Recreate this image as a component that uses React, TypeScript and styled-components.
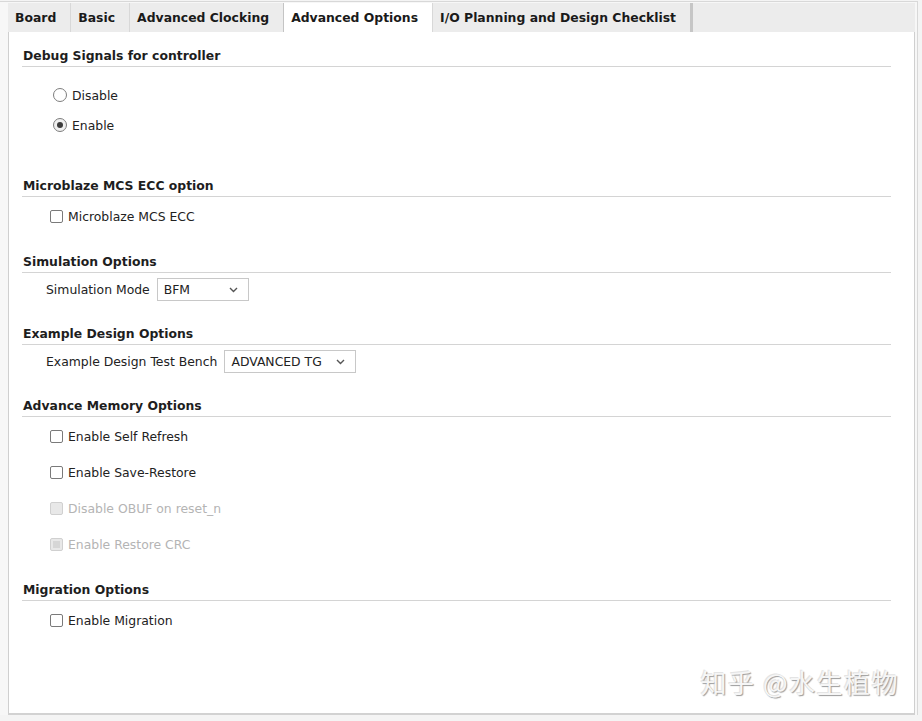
import React from "react";
import styled, { createGlobalStyle } from "styled-components";

const GlobalStyle = createGlobalStyle`
  html, body {
    margin: 0;
    padding: 0;
    background: #f4f4f4;
  }
  body {
    font-family: "DejaVu Sans", "Noto Sans", sans-serif;
    font-size: 12.4px;
    color: #1e1e1e;
  }
`;

const Frame = styled.div`
  position: relative;
  box-sizing: border-box;
  width: 918px;
  height: 714px;
  margin: 1px 0 0 0;
  padding: 1px 2px 0 8px;
  border-top: 1px solid #d8d8d8;
  border-right: 1px solid #d8d8d8;
  display: flex;
  flex-direction: column;
  background: #f7f7f7;
`;

const TabBar = styled.div`
  display: flex;
  height: 29px;
  background: #ececec;
  align-items: stretch;
`;

const Tab = styled.div<{ $active?: boolean; $last?: boolean }>`
  display: flex;
  align-items: center;
  padding: 0 14px 0 7px;
  font-weight: bold;
  color: #1a1a1a;
  background: ${(p) => (p.$active ? "#ffffff" : "transparent")};
  border-left: 1px solid ${(p) => (p.$active ? "#c4c4c4" : "#d8d8d8")};
  &:first-child {
    border-left: none;
  }
  ${(p) =>
    p.$last &&
    `
    border-right: 3px solid #c6c6c6;
  `}
`;

const Panel = styled.div`
  flex: 1;
  background: #ffffff;
  border-left: 1px solid #cfcfcf;
  border-right: 1px solid #cfcfcf;
  border-bottom: 2px solid #d2d2d2;
  padding: 0 23px 0 13px;
`;

const Section = styled.section<{ $top: number }>`
  margin-top: ${(p) => p.$top}px;
`;

const Heading = styled.div`
  font-weight: bold;
  line-height: 17px;
  padding: 0 0 2px 1px;
  border-bottom: 1px solid #d4d4d4;
`;

const Body = styled.div<{ $top: number }>`
  margin-top: ${(p) => p.$top}px;
  display: flex;
  flex-direction: column;
`;

const OptionRow = styled.label<{ $h: number; $indent: number; $disabled?: boolean }>`
  display: flex;
  align-items: center;
  height: ${(p) => p.$h}px;
  padding-left: ${(p) => p.$indent}px;
  gap: 5px;
  color: ${(p) => (p.$disabled ? "#b4b4b4" : "#222222")};
`;

const RadioCircle = styled.span<{ $checked?: boolean }>`
  box-sizing: border-box;
  width: 14px;
  height: 14px;
  border-radius: 50%;
  border: 1px solid #7d7d7d;
  background: ${(p) => (p.$checked ? "#f0f0f0" : "#ffffff")};
  display: flex;
  align-items: center;
  justify-content: center;
  &::after {
    content: "";
    width: 6px;
    height: 6px;
    border-radius: 50%;
    background: ${(p) => (p.$checked ? "#3c3c3c" : "transparent")};
  }
`;

const CheckBox = styled.span<{ $disabled?: boolean; $mark?: boolean }>`
  box-sizing: border-box;
  width: 13px;
  height: 13px;
  border-radius: 2px;
  border: 1px solid ${(p) => (p.$disabled ? "#d0d0d0" : "#7a7a7a")};
  background: ${(p) => (p.$disabled ? "#e8e8e8" : "#ffffff")};
  display: flex;
  align-items: center;
  justify-content: center;
  &::after {
    content: "";
    width: 7px;
    height: 7px;
    background: ${(p) => (p.$mark ? "#d6d6d6" : "transparent")};
  }
`;

const FieldRow = styled.div`
  display: flex;
  align-items: center;
  height: 23px;
  padding-left: 24px;
  gap: 7px;
  color: #222222;
`;

const Select = styled.div<{ $w: number }>`
  box-sizing: border-box;
  width: ${(p) => p.$w}px;
  height: 23px;
  border: 1px solid #c8c8c8;
  background: #ffffff;
  display: flex;
  align-items: center;
  justify-content: space-between;
  padding: 0 10px 0 6px;
`;

const Watermark = styled.div`
  position: absolute;
  right: 18px;
  bottom: 15px;
  font-family: "Noto Sans CJK SC", sans-serif;
  font-size: 26px;
  letter-spacing: 1.5px;
  color: #f6f6f6;
  text-shadow: 1px 1px 1px #9c9c9c, -1px -1px 0 #e4e4e4;
`;

const Chevron = () => (
  <svg width="9" height="6" viewBox="0 0 9 6">
    <path d="M1 1 L4.5 4.5 L8 1" fill="none" stroke="#555" strokeWidth="1.4" />
  </svg>
);

const Check: React.FC<{ label: string; h: number; disabled?: boolean; mark?: boolean }> = ({
  label,
  h,
  disabled,
  mark,
}) => (
  <OptionRow $h={h} $indent={28} $disabled={disabled}>
    <CheckBox $disabled={disabled} $mark={mark} />
    {label}
  </OptionRow>
);

export default function App() {
  return (
    <>
      <GlobalStyle />
      <Frame>
        <TabBar>
          <Tab>Board</Tab>
          <Tab>Basic</Tab>
          <Tab>Advanced Clocking</Tab>
          <Tab $active>Advanced Options</Tab>
          <Tab $last>I/O Planning and Design Checklist</Tab>
        </TabBar>
        <Panel>
          <Section $top={15}>
            <Heading>Debug Signals for controller</Heading>
            <Body $top={13}>
              <OptionRow $h={30} $indent={31}>
                <RadioCircle />
                Disable
              </OptionRow>
              <OptionRow $h={30} $indent={31}>
                <RadioCircle $checked />
                Enable
              </OptionRow>
            </Body>
          </Section>

          <Section $top={37}>
            <Heading>Microblaze MCS ECC option</Heading>
            <Body $top={7}>
              <Check label="Microblaze MCS ECC" h={24} />
            </Body>
          </Section>

          <Section $top={25}>
            <Heading>Simulation Options</Heading>
            <Body $top={5}>
              <FieldRow>
                Simulation Mode
                <Select $w={92}>
                  BFM
                  <Chevron />
                </Select>
              </FieldRow>
            </Body>
          </Section>

          <Section $top={24}>
            <Heading>Example Design Options</Heading>
            <Body $top={5}>
              <FieldRow>
                Example Design Test Bench
                <Select $w={132}>
                  ADVANCED TG
                  <Chevron />
                </Select>
              </FieldRow>
            </Body>
          </Section>

          <Section $top={24}>
            <Heading>Advance Memory Options</Heading>
            <Body $top={1}>
              <Check label="Enable Self Refresh" h={36} />
              <Check label="Enable Save-Restore" h={36} />
              <Check label="Disable OBUF on reset_n" h={36} disabled />
              <Check label="Enable Restore CRC" h={36} disabled mark />
            </Body>
          </Section>

          <Section $top={19}>
            <Heading>Migration Options</Heading>
            <Body $top={1}>
              <Check label="Enable Migration" h={36} />
            </Body>
          </Section>
        </Panel>
        <Watermark>知乎 @水生植物</Watermark>
      </Frame>
    </>
  );
}
